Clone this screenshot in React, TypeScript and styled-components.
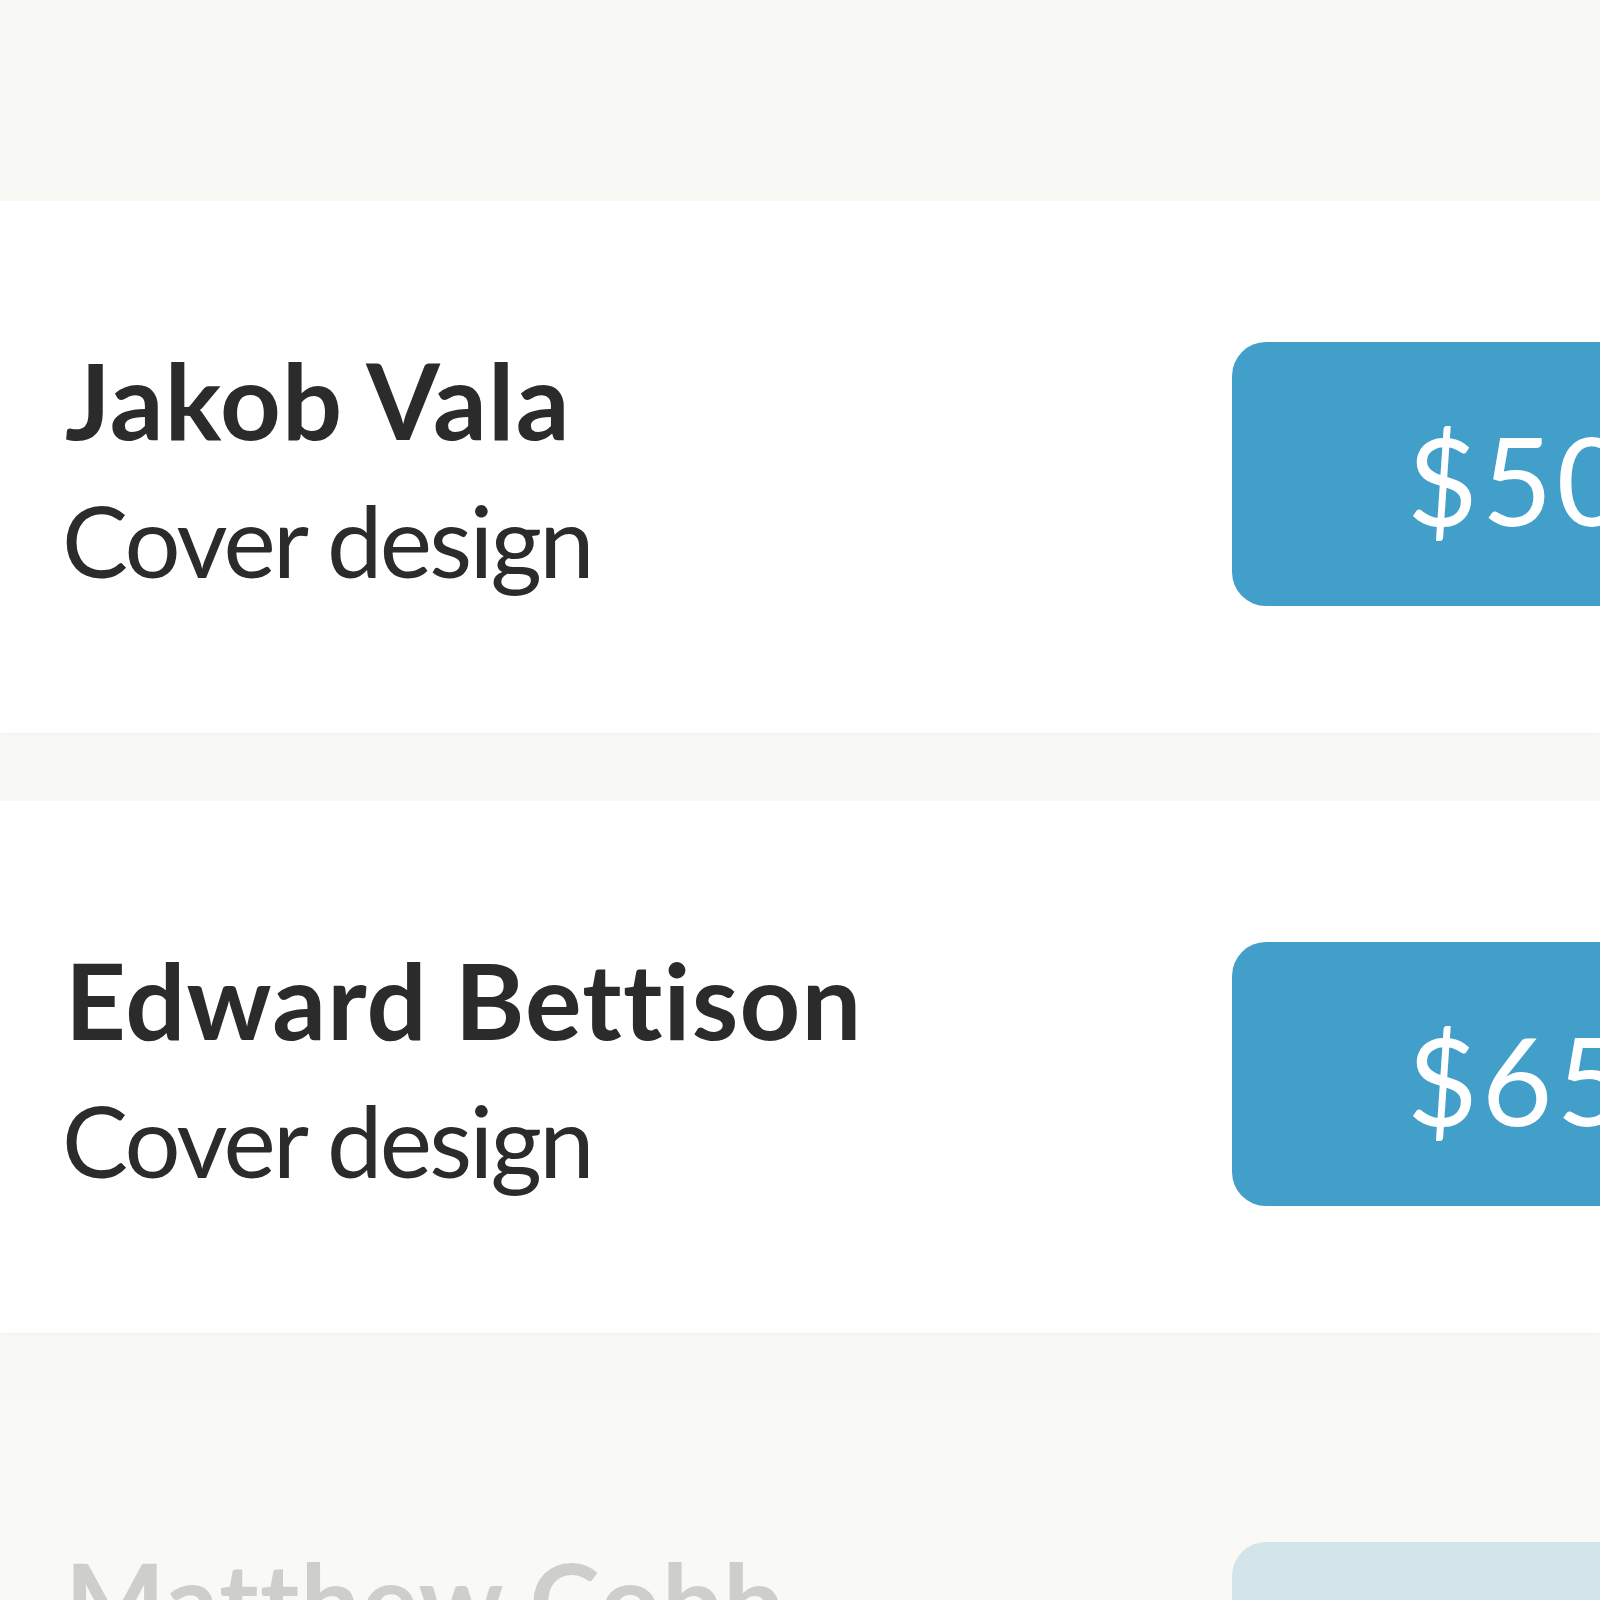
import * as React from "react";
import styled, { createGlobalStyle } from "styled-components";

const colors = {
    page: "#F8F8F4",
    card: "#FFFFFF",
    text: "#2B2B2B",
    badge: "#429FC9",
};

const GlobalStyle = createGlobalStyle`
    html, body {
        margin: 0;
        padding: 0;
        background: ${colors.page};
        overflow: hidden;
    }
    body {
        font-family: Lato, "Open Sans", sans-serif;
        font-variant-ligatures: none;
    }
`;

const Screen = styled.div`
    width: 1600px;
    height: 1600px;
    overflow: hidden;
    background: ${colors.page};
    padding-top: 201px;
    box-sizing: border-box;
`;

const List = styled.div`
    display: flex;
    flex-direction: column;
    gap: 68px;
`;

const Card = styled.div<{ $faded?: boolean }>`
    display: flex;
    align-items: flex-start;
    justify-content: space-between;
    height: 532px;
    padding-left: 65px;
    box-sizing: border-box;
    background: ${colors.card};
    box-shadow: 0 2px 3px rgba(0, 0, 0, 0.025);
    opacity: ${p => (p.$faded ? 0.2 : 1)};
`;

const Info = styled.div`
    display: flex;
    flex-direction: column;
    padding-top: 135px;
    color: ${colors.text};
`;

const Name = styled.div`
    font-size: 106px;
    font-weight: 700;
    line-height: 1.2;
    letter-spacing: 1.2px;
    white-space: nowrap;
`;

const Job = styled.div`
    font-size: 99px;
    font-weight: 400;
    line-height: 1.2;
    letter-spacing: -2.7px;
    margin: 18px 0 0 -3px;
    white-space: nowrap;
`;

const Price = styled.div`
    flex-shrink: 0;
    display: flex;
    align-items: center;
    width: 560px;
    height: 264px;
    margin-top: 141px;
    margin-right: -192px;
    padding: 9px 0 0 175px;
    box-sizing: border-box;
    border-radius: 34px;
    background: ${colors.badge};
    color: #ffffff;
    font-size: 122px;
    font-weight: 400;
    letter-spacing: 4px;
    line-height: 1;
`;

const jobs = [
    { name: "Jakob Vala", job: "Cover design", price: "$50" },
    { name: "Edward Bettison", job: "Cover design", price: "$65" },
    { name: "Matthew Cobb", job: "Cover design", price: "$40" },
];

export default function App() {
    return (
        <>
            <GlobalStyle />
            <Screen>
                <List>
                    {jobs.map((j, i) => (
                        <Card key={j.name} $faded={i === jobs.length - 1}>
                            <Info>
                                <Name>{j.name}</Name>
                                <Job>{j.job}</Job>
                            </Info>
                            <Price>{j.price}</Price>
                        </Card>
                    ))}
                </List>
            </Screen>
        </>
    );
}
